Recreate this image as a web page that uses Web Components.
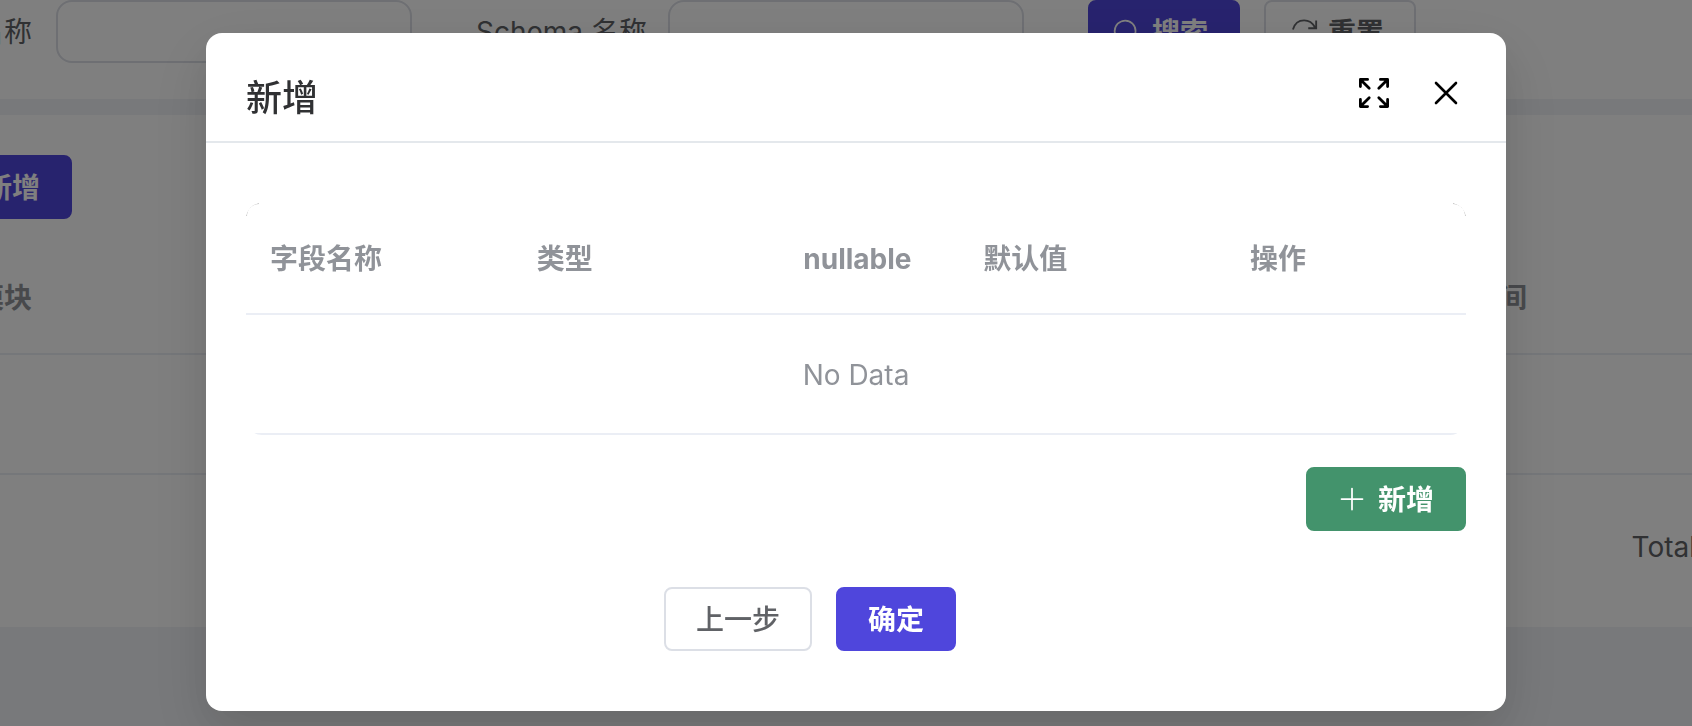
<!DOCTYPE html>
<html lang="zh-CN">
<head>
<meta charset="utf-8">
<title>新增</title>
<style>
  html, body { margin: 0; min-height: 100%; }
  body {
    background: #f1f3f6;
    color: #606266;
    font: 400 28px/40px Inter, "Noto Sans CJK SC", sans-serif;
    overflow: hidden;
  }
</style>
</head>
<body>
<schema-page></schema-page>
<modal-dialog heading="新增">
  <field-table></field-table>
  <ui-button slot="add" kind="success" icon="plus">新增</ui-button>
  <ui-button slot="actions">上一步</ui-button>
  <ui-button slot="actions" kind="primary">确定</ui-button>
</modal-dialog>

<script>
const ICONS = {
  search: '<path d="m795.904 750.72 124.992 124.928a32 32 0 0 1-45.248 45.248L750.656 795.904a416 416 0 1 1 45.248-45.184zM480 832a352 352 0 1 0 0-704 352 352 0 0 0 0 704z"/>',
  refresh: '<g fill="none" stroke="currentColor" stroke-width="68"><path id="turn" d="M180 420C250 170 400 85 590 85C750 85 890 160 985 340M1030 90V375H740"/><path d="M1028 640C958 890 808 975 618 975C458 975 318 900 223 720M178 970V685H468"/></g>',
  plus: '<path d="M480 480V128a32 32 0 0 1 64 0v352h352a32 32 0 1 1 0 64H544v352a32 32 0 1 1-64 0V544H128a32 32 0 0 1 0-64h352z"/>'
};

class UiButton extends HTMLElement {
  connectedCallback() {
    if (this.shadowRoot) return;
    const icon = ICONS[this.getAttribute('icon')];
    const kind = this.getAttribute('kind') || 'plain';
    this.attachShadow({ mode: 'open' }).innerHTML = `
      <style>
        :host { display: block; flex: none; }
        button {
          display: flex; align-items: center; justify-content: center; gap: 12px;
          box-sizing: border-box; height: 64px; margin: 0; padding: 0 30px;
          border: 2px solid #dcdfe6; border-radius: 8px;
          background: #fff; color: #606266;
          font: inherit; font-weight: 500; line-height: 28px; white-space: nowrap;
        }
        :host([compact]) button { padding-left: 22px; }
        .primary, .success { color: #fff; font-weight: 700; }
        .primary { background: #4f46dc; border-color: #4f46dc; }
        .success { background: #43936c; border-color: #43936c; }
        :host([compact]) .plain { font-weight: 700; }
        svg { width: 28px; height: 28px; fill: currentColor; overflow: visible; }
        span { padding-top: 2px; }
      </style>
      <button type="button" class="${kind}">
        ${icon ? `<svg viewBox="0 0 1024 1024" aria-hidden="true">${icon}</svg>` : ''}
        <span><slot></slot></span>
      </button>`;
  }
}

class TextField extends HTMLElement {
  connectedCallback() {
    if (this.shadowRoot) return;
    this.attachShadow({ mode: 'open' }).innerHTML = `
      <style>
        :host { display: flex; align-items: center; gap: 24px; flex: none; }
        label { width: 168px; text-align: right; white-space: nowrap; }
        :host([narrow]) label { width: 120px; }
        input {
          box-sizing: border-box; width: 356px; height: 63px; margin: 0; padding: 0 24px;
          border: 2px solid #dcdfe6; border-radius: 16px; background: #fff;
          font: inherit; color: inherit;
        }
      </style>
      <label for="field">${this.getAttribute('label')}</label>
      <input id="field" type="text">`;
  }
}

class SchemaPage extends HTMLElement {
  connectedCallback() {
    if (this.shadowRoot) return;
    this.attachShadow({ mode: 'open' }).innerHTML = `
      <style>
        /* The content pane is scrolled sideways by 88px. */
        :host { display: flex; flex-direction: column; gap: 16px; margin-left: -88px; margin-right: -40px; }
        section { background: #fff; }
        .search { display: flex; align-items: flex-start; gap: 64px; padding-bottom: 35px; }
        .buttons { display: flex; gap: 24px; }
        .list { padding-top: 40px; }
        table { width: 100%; margin-top: 24px; border-collapse: separate; border-spacing: 0; table-layout: fixed; }
        th, td { box-sizing: border-box; padding: 0 0 0 64px; border-bottom: 2px solid #ebeef5; text-align: left; }
        th { height: 112px; color: #909399; font-weight: 700; }
        td { height: 120px; }
        th:last-child { width: 261px; padding: 0; }
        footer { display: flex; justify-content: flex-end; padding: 52px 36px 60px 0; }
      </style>
      <section class="search">
        <text-field narrow label="名称"></text-field>
        <text-field label="Schema 名称"></text-field>
        <div class="buttons">
          <ui-button compact kind="primary" icon="search">搜索</ui-button>
          <ui-button compact icon="refresh">重置</ui-button>
        </div>
      </section>
      <section class="list">
        <ui-button kind="primary" icon="plus">新增</ui-button>
        <table>
          <thead><tr><th>模块</th><th>时间</th></tr></thead>
          <tbody><tr><td></td><td></td></tr></tbody>
        </table>
        <footer>Total</footer>
      </section>`;
  }
}

class FieldTable extends HTMLElement {
  connectedCallback() {
    if (this.shadowRoot) return;
    this.attachShadow({ mode: 'open' }).innerHTML = `
      <style>
        :host { display: block; position: relative; overflow: hidden; border-radius: 16px; color: #909399; }
        :host::before, :host::after {
          content: ""; position: absolute; top: 0; width: 13px; height: 13px;
          box-sizing: border-box; border-top: 1px solid #aaa;
        }
        :host::before { left: 0; border-left: 1px solid #aaa; border-top-left-radius: 16px; }
        :host::after { right: 0; border-right: 1px solid #aaa; border-top-right-radius: 16px; }
        table { width: 100%; border-collapse: separate; border-spacing: 0; table-layout: fixed; }
        th, td { box-sizing: border-box; padding: 2px 24px 0; border-bottom: 2px solid #ebeef5; }
        th { height: 112px; text-align: left; font-weight: 700; }
        td { height: 120px; text-align: center; }
        .flag { width: 180px; }
        .ops { width: 240px; }
      </style>
      <table>
        <thead><tr>
          <th>字段名称</th><th>类型</th><th class="flag">nullable</th><th>默认值</th><th class="ops">操作</th>
        </tr></thead>
        <tbody><tr><td colspan="5">No Data</td></tr></tbody>
      </table>`;
  }
}

class ModalDialog extends HTMLElement {
  connectedCallback() {
    if (this.shadowRoot) return;
    this.attachShadow({ mode: 'open' }).innerHTML = `
      <style>
        :host {
          display: block; position: fixed; inset: 0; overflow: auto;
          box-sizing: border-box; padding: 33px 186px 15px 206px;
          background: rgba(0, 0, 0, .5);
        }
        .panel {
          background: #fff; border-radius: 16px;
          box-shadow: 0 24px 64px 8px rgba(0, 0, 0, .08), 0 16px 40px rgba(0, 0, 0, .08);
        }
        header {
          display: flex; align-items: flex-start; justify-content: space-between;
          padding: 41px 40px 19px; border-bottom: 2px solid #e4e8ec;
        }
        h2 { margin: 0; color: #303133; font-size: 36px; font-weight: 500; line-height: 48px; }
        .tools { display: flex; gap: 32px; }
        .tools button { display: flex; width: 40px; height: 38px; padding: 0; border: 0; background: none; color: #000; }
        svg { width: 40px; height: 38px; fill: none; stroke: currentColor; }
        .body { padding: 60px 40px; }
        .add { display: flex; justify-content: flex-end; padding-top: 32px; }
        .actions { display: flex; justify-content: center; gap: 24px; padding: 56px 92px 0 0; }
      </style>
      <div class="panel" role="dialog" aria-modal="true" aria-labelledby="title">
        <header>
          <h2 id="title">${this.getAttribute('heading')}</h2>
          <div class="tools">
            <button type="button" aria-label="全屏"><svg viewBox="0 1 40 38" stroke-width="2.800" stroke-linecap="round" stroke-linejoin="round">
              <path d="M6.400 13.600V6.400H13.600M6.400 6.400l8.800 8.800M26.400 6.400h7.200V13.600M33.600 6.400l-8.800 8.800M6.400 26.400v7.200H13.600M6.400 33.600l8.800-8.800M26.400 33.600h7.200V26.400M33.600 33.600l-8.800-8.800"/>
            </svg></button>
            <button type="button" aria-label="关闭"><svg viewBox="0 1 40 38" stroke-width="2.600" stroke-linecap="round">
              <path d="m10 10 20 20M30 10 10 30"/>
            </svg></button>
          </div>
        </header>
        <div class="body">
          <slot></slot>
          <div class="add"><slot name="add"></slot></div>
          <div class="actions"><slot name="actions"></slot></div>
        </div>
      </div>`;
  }
}

customElements.define('ui-button', UiButton);
customElements.define('text-field', TextField);
customElements.define('schema-page', SchemaPage);
customElements.define('field-table', FieldTable);
customElements.define('modal-dialog', ModalDialog);
</script>
</body>
</html>
